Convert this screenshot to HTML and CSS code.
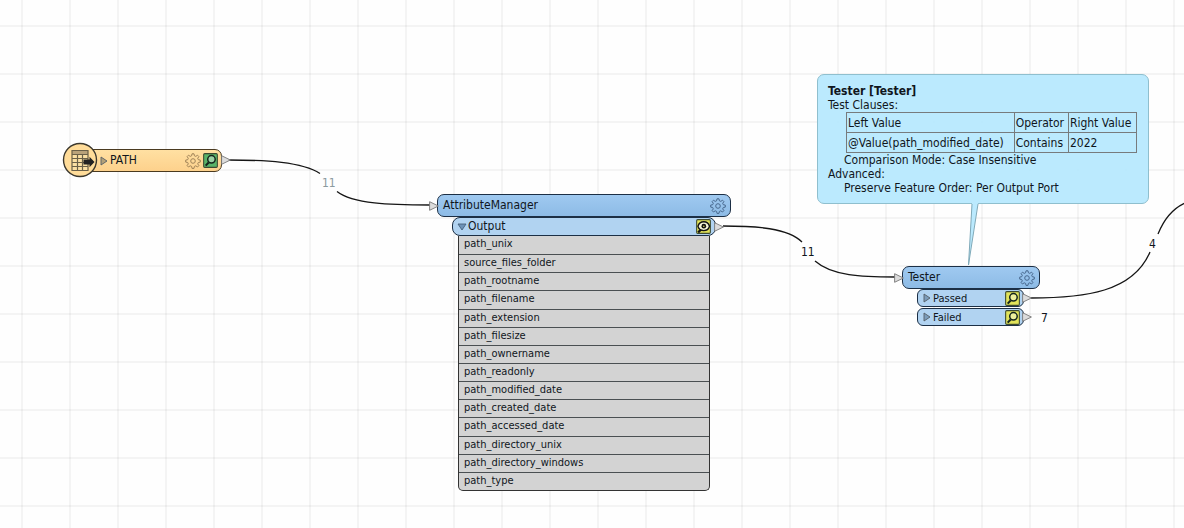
FILE: index.html
```html
<!DOCTYPE html>
<html lang="en">
<head>
<meta charset="utf-8">
<title>Workspace</title>
<link rel="stylesheet" href="styles.css">
</head>
<body>
<svg class="defs" aria-hidden="true">
  <symbol id="gear" viewBox="0 0 16 16">
    <path class="gear-body" d="M7 .8h2l.4 2 1.4.6 1.7-1.2 1.4 1.4-1.2 1.700.6 1.400 2 .4v2l-2 .4-.6 1.400 1.200 1.700-1.400 1.400-1.700-1.200-1.400.6-.4 2H7l-.4-2-1.400-.6-1.700 1.200-1.400-1.400 1.200-1.700-.6-1.400-2-.4v-2l2-.4.6-1.400-1.200-1.700 1.400-1.400 1.700 1.200 1.400-.6z"/>
    <circle class="gear-body" cx="8" cy="8" r="2.3"/>
  </symbol>
  <symbol id="lens" viewBox="0 0 14 14">
    <rect x=".6" y=".6" width="12.8" height="12.8" rx="1" fill="currentColor" stroke="#3d4a32" stroke-width="1"/>
    <path d="M2.500 11.800 5.300 8.800" stroke="#15251c" stroke-width="2"/>
    <circle cx="7.900" cy="5.900" r="3.500" fill="#fff" fill-opacity=".4" stroke="#15251c" stroke-width="1.400"/>
  </symbol>
  <symbol id="eye" viewBox="0 0 14 14">
    <rect x=".6" y=".6" width="12.8" height="12.8" rx="1" fill="currentColor" stroke="#3d4a32" stroke-width="1"/>
    <path d="M2 12.500 4.800 9.800" stroke="#111" stroke-width="2.200"/>
    <path d="M1.800 6.800C3.500 1.200 11 1.200 12.600 6.800 11 12.200 3.500 12.200 1.800 6.800z" fill="#f4f4d8" stroke="#111" stroke-width="1.300"/>
    <circle cx="7.300" cy="6.700" r="2.200" fill="#111"/><circle cx="7.300" cy="6.700" r=".7" fill="#e8ec70"/>
  </symbol>
  <symbol id="port" viewBox="0 0 10 10">
    <path d="M.6.7 9.400 5 .6 9.300z" fill="#dcdcdc" stroke="#777" stroke-width=".9"/>
  </symbol>
  <symbol id="fold" viewBox="0 0 8 10">
    <path d="M1 1v8L7 5z" fill="currentColor" stroke="#555f66" stroke-width=".9"/>
  </symbol>
  <symbol id="unfold" viewBox="0 0 10 8">
    <path d="M1 1h8L5 7z" fill="currentColor" stroke="#45617c" stroke-width=".9"/>
  </symbol>
</svg>

<main class="canvas">
  <svg class="links" aria-hidden="true">
    <path d="M228 160C266 160 302 162 320 173.500M337 191.500C353 204 390 205 430 205"/>
    <path d="M723 226C756 226 788 228 802 242M815 261C832 276 862 277 895 277"/>
    <path d="M1031 298C1085 298 1133 292 1150 252M1158 234C1164 219 1173 208 1186 202.500"/>
  </svg>

  <section class="node reader">
    <svg class="reader-icon" viewBox="0 0 36 36" aria-hidden="true">
      <circle cx="18" cy="18" r="16.500" fill="#ffdc99" stroke="#3c382e" stroke-width="1.400"/>
      <path d="M10 8.500h16v20H10z" fill="#fbe0a4"/>
      <path d="M10 8.500h16v4H10z" fill="#b9a27a"/>
      <path d="M10 12.500h16M10 16.500h16M10 20.500h16M10 24.500h16M15.500 12.500v16M20.500 12.500v16M10 8.500h16v20H10z" fill="none" stroke="#6a6048" stroke-width="1.200"/>
      <path d="M21.500 17.500h6V14.800l5 5.200-5 5.200v-2.700h-6z" fill="#222"/>
    </svg>
    <div class="bar reader-bar">
      <button class="icon" aria-label="Expand PATH"><svg class="fold"><use href="#fold"/></svg></button>
      <span class="label grow">PATH</span>
      <button class="icon" aria-label="PATH settings"><svg class="gear"><use href="#gear"/></svg></button>
      <button class="icon" aria-label="Inspect PATH"><svg class="lens green"><use href="#lens"/></svg></button>
    </div>
    <svg class="port out"><use href="#port"/></svg>
  </section>

  <section class="node manager">
    <header class="bar title">
      <svg class="port in"><use href="#port"/></svg>
      <span class="label grow">AttributeManager</span>
      <button class="icon" aria-label="AttributeManager settings"><svg class="gear"><use href="#gear"/></svg></button>
    </header>
    <div class="bar output">
      <button class="icon" aria-label="Collapse Output"><svg class="unfold"><use href="#unfold"/></svg></button>
      <span class="label grow">Output</span>
      <button class="icon" aria-label="Inspect Output"><svg class="lens"><use href="#eye"/></svg></button>
      <svg class="port out"><use href="#port"/></svg>
    </div>
    <ul class="attributes">
      <li>path_unix</li>
      <li>source_files_folder</li>
      <li>path_rootname</li>
      <li>path_filename</li>
      <li>path_extension</li>
      <li>path_filesize</li>
      <li>path_ownername</li>
      <li>path_readonly</li>
      <li>path_modified_date</li>
      <li>path_created_date</li>
      <li>path_accessed_date</li>
      <li>path_directory_unix</li>
      <li>path_directory_windows</li>
      <li>path_type</li>
    </ul>
  </section>

  <section class="node tester">
    <header class="bar title">
      <svg class="port in"><use href="#port"/></svg>
      <span class="label grow">Tester</span>
      <button class="icon" aria-label="Tester settings"><svg class="gear"><use href="#gear"/></svg></button>
    </header>
    <div class="bar result">
      <button class="icon" aria-label="Expand Passed"><svg class="fold blue"><use href="#fold"/></svg></button>
      <span class="label grow">Passed</span>
      <button class="icon" aria-label="Inspect Passed"><svg class="lens"><use href="#lens"/></svg></button>
      <svg class="port out"><use href="#port"/></svg>
    </div>
    <div class="bar result">
      <button class="icon" aria-label="Expand Failed"><svg class="fold blue"><use href="#fold"/></svg></button>
      <span class="label grow">Failed</span>
      <button class="icon" aria-label="Inspect Failed"><svg class="lens"><use href="#lens"/></svg></button>
      <svg class="port out"><use href="#port"/></svg>
    </div>
  </section>

  <aside class="note">
    <h2>Tester [Tester]</h2>
    <p>Test Clauses:</p>
    <table>
      <thead><tr><th>Left Value</th><th>Operator</th><th>Right Value</th></tr></thead>
      <tbody><tr><td>@Value(path_modified_date)</td><td>Contains</td><td>2022</td></tr></tbody>
    </table>
    <p class="indent">Comparison Mode: Case Insensitive</p>
    <p>Advanced:</p>
    <p class="indent">Preserve Feature Order: Per Output Port</p>
    <svg class="tail" viewBox="0 0 16 64" aria-hidden="true">
      <path d="M5 0 1.500 62 11 0z" fill="#bbeafe"/>
      <path d="M5 1 1.500 62 11 1" fill="none" stroke="#7fa9b8"/>
    </svg>
  </aside>

  <span class="count path-count">11</span>
  <span class="count manager-count">11</span>
  <span class="count passed-count">4</span>
  <span class="count failed-count">7</span>
</main>
</body>
</html>
```
FILE: styles.css
```css
* { box-sizing: border-box; }
body {
  margin: 0;
  font-family: "DejaVu Sans Condensed", "DejaVu Sans", sans-serif;
  font-size: 12px;
  color: #10161c;
}
svg { display: block; flex: none; }
.defs { position: absolute; width: 0; height: 0; }
.canvas {
  position: relative;
  height: 100vh;
  overflow: hidden;
  background-color: #fefefe;
  background-image:
    linear-gradient(90deg, rgba(0, 0, 0, .04) 2px, transparent 2px),
    linear-gradient(rgba(0, 0, 0, .04) 2px, transparent 2px);
  background-size: 48px 48px;
  background-position: 21px 25px;
}
.links { position: absolute; inset: 0; width: 100%; height: 100%; }
.links path { fill: none; stroke: #151515; stroke-width: 1.3; }

.node { position: absolute; }
.bar {
  position: relative;
  display: flex;
  align-items: center;
  border: 1px solid #1c2f45;
}
.grow { flex: 1; }
.label { white-space: nowrap; line-height: 15px; }
.icon { display: block; padding: 0; border: 0; background: none; }
.gear { width: 16px; height: 16px; }
.gear-body { fill: none; stroke: var(--gear-line, #48688e); stroke-width: 1; }
.lens { width: 15px; height: 15px; color: #e2e45a; }
.lens.green { color: #58b368; }
.fold { width: 8px; height: 10px; color: #b3a078; }
.fold.blue { color: #7c9cba; }
.unfold { width: 10px; height: 8px; color: #6d93b8; }
.port { position: absolute; top: 50%; width: 10px; height: 10px; margin-top: -5px; }
.port.out { right: -9px; }
.port.in { left: -9px; }

.reader { left: 62px; top: 142px; width: 160px; }
.reader-icon { position: absolute; left: 0; top: 0; width: 36px; height: 36px; z-index: 1; }
.reader-bar {
  height: 23px;
  margin: 7px 0 0 18px;
  padding: 0 3px 0 19px;
  gap: 2px;
  background: linear-gradient(#ffe0a2, #fdd18c);
  border-color: #4a3a20;
  border-radius: 7px;
}
.reader .gear { --gear-line: #a08358; }
.reader .port { top: 18px; }

.title {
  height: 23px;
  padding: 0 4px 0 5px;
  background: linear-gradient(#9fc9f0, #8dbbe6);
  border-radius: 7px;
}
.output, .result {
  background: #b1d3f1;
  border-radius: 8px;
}
.manager { left: 437px; top: 194px; width: 294px; }
.output { height: 19px; margin: 0 15px; padding: 0 4px; gap: 1px; }
.attributes {
  display: grid;
  grid-auto-rows: 1fr;
  min-height: 255px;
  margin: 0 21px;
  padding: 0;
  list-style: none;
  font-size: 11px;
  line-height: 16px;
  background: #d3d3d3;
  border: 1px solid #333;
  border-top: 0;
  border-radius: 0 0 5px 5px;
}
.attributes li { padding-left: 5px; }
.attributes li + li { border-top: 1px solid #4a4f52; }

.tester { left: 902px; top: 266px; width: 138px; }
.result { height: 18px; margin: 0 16px 1px 15px; padding: 0 3px 0 5px; gap: 2px; border-radius: 6px; }
.result .label { font-size: 11px; }

.note {
  position: absolute;
  left: 817px;
  top: 74px;
  width: 332px;
  padding: 9px 11px 8px 10px;
  line-height: 14px;
  background: rgba(183, 233, 254, .95);
  border: 1px solid #8fbfce;
  border-radius: 7px;
}
.note h2, .note p { margin: 0; font-size: 12px; white-space: nowrap; }
.note .indent { padding-left: 16px; }
.note table {
  width: 291px;
  margin-left: 18px;
  border-collapse: collapse;
  white-space: nowrap;
}
.note th, .note td {
  height: 20px;
  padding: 0 1px;
  border: 1px solid #777b7d;
  font-weight: normal;
  text-align: left;
}
.tail { position: absolute; left: 149px; top: 100%; width: 16px; height: 64px; }

.count { position: absolute; line-height: 14px; }
.path-count { left: 322px; top: 176px; color: #8b9a9e; }
.manager-count { left: 801px; top: 245px; }
.passed-count { left: 1149px; top: 237px; }
.failed-count { left: 1041px; top: 311px; }
```
